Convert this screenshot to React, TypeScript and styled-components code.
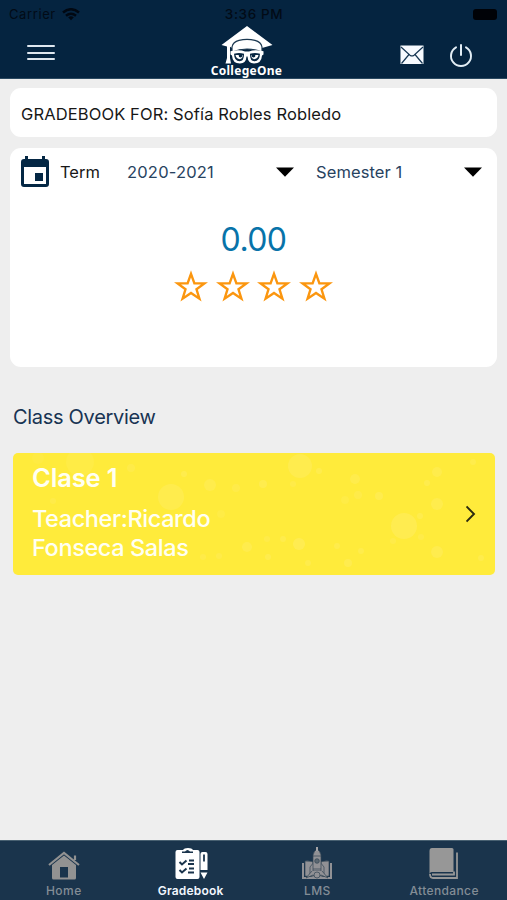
import React from "react";
import styled, { createGlobalStyle } from "styled-components";

const Global = createGlobalStyle`
  * { box-sizing: border-box; }
  body { margin: 0; background: #eeeeee; font-family: Inter, "Liberation Sans", sans-serif; }
`;

const Screen = styled.div`
  width: 507px;
  height: 900px;
  display: flex;
  flex-direction: column;
  background: #eeeeee;
  overflow: hidden;
`;

const Header = styled.header`
  height: 79px;
  flex: none;
  background: #052440;
  border-bottom: 1px solid #2b4961;
`;

const StatusBar = styled.div`
  height: 27px;
  display: grid;
  grid-template-columns: 1fr auto 1fr;
  align-items: center;
  padding: 1px 10px 0 9px;
  color: #020b16;
  font-size: 13px;
  line-height: 16px;
`;

const Carrier = styled.div`
  display: flex;
  align-items: center;
  gap: 6px;
  letter-spacing: 0.6px;
`;

const Clock = styled.div`
  margin-left: 2px;
  font-size: 13.5px;
  font-weight: 500;
  letter-spacing: 0.6px;
`;

const Battery = styled.div`
  justify-self: end;
  width: 24px;
  height: 11px;
  border-radius: 3px;
  background: #000207;
`;

const NavBar = styled.div`
  height: 51px;
  display: grid;
  grid-template-columns: 1fr auto 1fr;
  padding: 0 34px 0 27px;
`;

const MenuLines = styled.div`
  margin-top: 18px;
  width: 28px;
  height: 15px;
  display: flex;
  flex-direction: column;
  justify-content: space-between;
`;

const Line = styled.span`
  height: 2px;
  border-radius: 1px;
  background: #dfe7ef;
`;

const Brand = styled.div`
  display: flex;
  flex-direction: column;
  align-items: center;
  width: 75px;
  margin: -1px 7px 0 0;
`;

const BrandName = styled.div`
  font: 700 12px/14px "Noto Sans", "Open Sans", sans-serif;
  letter-spacing: 0.28px;
  color: #ffffff;
`;

const Actions = styled.div`
  display: flex;
  justify-content: flex-end;
  gap: 25px;
  padding-top: 17px;
`;

const Main = styled.main`
  flex: 1;
  padding: 9px 10px 0;
`;

const Card = styled.section<{ $height: number }>`
  height: ${(p) => p.$height}px;
  background: #ffffff;
  border-radius: 11px;
`;

const StudentCard = styled(Card)`
  display: flex;
  align-items: center;
  padding: 2px 11px 0;
  margin-bottom: 11px;
`;

const Label = styled.span<{ $color?: string; $track?: number }>`
  font-size: 16.5px;
  line-height: 22px;
  white-space: nowrap;
  color: ${(p) => p.$color ?? "#171717"};
  letter-spacing: ${(p) => p.$track ?? 0}px;
`;

const Filters = styled.div`
  display: grid;
  grid-template-columns: 30px 67px 188px 1fr;
  align-items: center;
  height: 46px;
  padding: 2px 15px 0 10px;
  & > :nth-child(2) { padding-left: 10px; }
`;

const Select = styled.div`
  display: flex;
  align-items: center;
  justify-content: space-between;
  padding-left: 10px;
  & > svg { margin-right: 11px; }
  &:last-child { padding-left: 11px; }
  &:last-child > svg { margin-right: 0; }
`;

const Score = styled.div`
  margin-top: 25px;
  text-align: center;
  color: #0873a9;
  font-size: 32px;
  line-height: 42px;
  letter-spacing: -0.6px;
`;

const Stars = styled.div`
  display: flex;
  justify-content: center;
  gap: 7.8px;
  margin-top: 8px;
`;

const Heading = styled.h2`
  margin: 36px 0 0 3px;
  font-size: 20px;
  line-height: 28px;
  font-weight: 400;
  letter-spacing: -0.3px;
  color: #183453;
`;

const ClassCard = styled.section`
  position: relative;
  display: flex;
  align-items: center;
  justify-content: space-between;
  width: 482px;
  height: 122px;
  margin: 22px 0 0 3px;
  padding: 0 19px;
  border-radius: 5px;
  background: #ffeb3b;
  overflow: hidden;
`;

const Bokeh = styled.svg`
  position: absolute;
  inset: 0;
`;

const ClassInfo = styled.div`
  position: relative;
  align-self: flex-start;
  color: #fffff2;
`;

const ClassName = styled.div`
  margin-top: 9px;
  font-size: 25.5px;
  line-height: 32px;
  font-weight: 600;
  letter-spacing: -0.15px;
`;

const Teacher = styled.div`
  width: 205px;
  margin-top: 10px;
  font-size: 23.5px;
  line-height: 29px;
  font-weight: 500;
  letter-spacing: -0.4px;
`;

const Chevron = styled.svg`
  position: relative;
`;

const TabBar = styled.nav`
  flex: none;
  height: 60px;
  display: grid;
  grid-template-columns: repeat(4, 1fr);
  border-top: 1px solid #486071;
  background: #1a344c;
`;

const Tab = styled.div<{ $active?: boolean; $track: number }>`
  display: flex;
  flex-direction: column;
  align-items: center;
  padding: 6px 0 0 1px;
  font-size: 12px;
  line-height: 16px;
  font-weight: ${(p) => (p.$active ? 600 : 500)};
  letter-spacing: ${(p) => p.$track}px;
  color: ${(p) => (p.$active ? "#f2f7ff" : "#838d96")};
  & > svg { margin-bottom: 2px; }
`;

const Arrow = () => (
  <svg width="18" height="10" viewBox="0 0 18 10">
    <path d="M0 .5h18L9 9.7z" fill="#000" />
  </svg>
);

const Star = () => (
  <svg width="34" height="33" viewBox="0 0 34 33">
    <path d="M17 4.8 20.4 14.4h10L22.5 20.3l2.9 9.4-8.4-5.7-8.4 5.7 2.9-9.4L3.6 14.4h10z" fill="none" stroke="#fb960f" strokeWidth="2.4" />
  </svg>
);

const bubbles = [
  [67, 9, 14, 0.08], [158, 44, 13, 0.13], [197, 32, 6, 0.12], [171, 21, 3, 0.13],
  [25, 5, 6, 0.06], [118, 15, 4, 0.1], [223, 35, 4, 0.1], [208, 61, 4, 0.08],
  [234, 94, 5, 0.13], [287, 13, 12, 0.14], [250, 31, 4, 0.14], [280, 31, 3, 0.1],
  [306, 18, 3, 0.13], [342, 26, 5, 0.12], [345, 42, 4, 0.1], [366, 43, 4, 0.14],
  [332, 47, 4, 0.08], [391, 73, 13, 0.15], [424, 51, 6, 0.13], [424, 19, 5, 0.12],
  [414, 30, 3, 0.13], [407, 63, 3, 0.13], [424, 99, 6, 0.14], [286, 91, 6, 0.16],
  [324, 93, 3, 0.12], [348, 98, 3, 0.12], [335, 110, 4, 0.14], [295, 110, 3, 0.12],
  [255, 104, 3, 0.13], [254, 86, 3, 0.1], [270, 86, 3, 0.12], [460, 9, 3, 0.12],
  [468, 105, 3, 0.12], [380, 88, 3, 0.1], [408, 84, 3, 0.1], [40, 48, 3, 0.1],
  [190, 104, 3, 0.1], [206, 103, 3, 0.1],
];

export default function App() {
  return (
    <Screen>
      <Global />
      <Header>
        <StatusBar>
          <Carrier>
            Carrier
            <svg width="18" height="13" viewBox="0 0 18 13" fill="none" stroke="#010812" strokeWidth="2.5">
              <path d="M1 4.5Q9-2 17 4.5M4 7.8q5-4.2 10 0" />
              <path d="M6.2 9.2Q9 7.4 11.8 9.2L9 12.2z" fill="#010812" stroke="none" />
            </svg>
          </Carrier>
          <Clock>3:36 PM</Clock>
          <Battery />
        </StatusBar>
        <NavBar>
          <MenuLines><Line /><Line /><Line /></MenuLines>
          <Brand>
            <svg width="52" height="38" viewBox="0 0 52 38">
              <path d="M26 0 51.5 19 41 22H11l-2-1.300V32l1 5.500H4.500L6 32V20.500L.5 19z" fill="#fff" />
              <path d="M11 26v-5q1-5 7-6.600 8-2.200 16 0 6 1.600 7 6.600v5q-15-6-30 0z" fill="#fff" stroke="#1b3850" strokeWidth="1.200" />
              <path d="M9.500 25.200q9-2.200 14.500.3h4q5.500-2.500 14.500-.3v3.300l-1.500 1q-.5 8-8 8-6 0-6.500-7h-1q-.5 7-6.500 7-7.500 0-8-8l-1.500-1z" fill="#fff" />
              <path d="M13 27.700q5-1.500 10 0 .3 7.600-4.500 7.600-5.200 0-5.500-7.600zm16 0q5-1.500 10 0-.3 7.600-5.500 7.600-4.800 0-4.500-7.600z" fill="#0b2944" />
              <path d="M14.500 29h7q.8 3.800-2.500 4.300-3.800-.5-4.500-4.300zm16 0h7q-.7 3.800-4.500 4.300-3.300-.5-2.500-4.300z" fill="#fff" />
              <circle cx="19.500" cy="29.800" r="1.800" fill="#052440" /><circle cx="32.500" cy="29.800" r="1.800" fill="#052440" />
            </svg>
            <BrandName>CollegeOne</BrandName>
          </Brand>
          <Actions>
            <svg width="24" height="22" viewBox="0 0 24 22">
              <path d="M.5 1.5h23v18.5H.5z" fill="#f7faff" />
              <path d="m1 3 9 8.200q2 1.500 4 0L23 3M1.500 19.500l7.500-9m6 0 7.500 9" fill="none" stroke="#163653" strokeWidth="1.200" />
            </svg>
            <svg width="24" height="24" viewBox="0 0 24 24" fill="none" stroke="#e2edf5" strokeWidth="2">
              <path d="M7 3.300a10 10 0 1 0 10 0M12 1v10" strokeLinecap="round" />
            </svg>
          </Actions>
        </NavBar>
      </Header>
      <Main>
        <StudentCard $height={49}>
          <Label $track={0.12}>GRADEBOOK FOR: Sofía Robles Robledo</Label>
        </StudentCard>
        <Card $height={219}>
          <Filters>
            <svg width="30" height="32" viewBox="0 0 30 32">
              <path fillRule="evenodd" d="M5 0h3v3h14V0h3v3h1q3 0 3 3v22q0 3-3 3H4q-3 0-3-3V6q0-3 3-3h1zM4 11v17h22V11z" fill="#042744" />
              <path d="M15 17h8v8h-8z" fill="#042744" />
            </svg>
            <Label>Term</Label>
            <Select><Label $color="#28435f" $track={0.2}>2020-2021</Label><Arrow /></Select>
            <Select><Label $color="#28435f" $track={0.1}>Semester 1</Label><Arrow /></Select>
          </Filters>
          <Score>0.00</Score>
          <Stars><Star /><Star /><Star /><Star /></Stars>
        </Card>
        <Heading>Class Overview</Heading>
        <ClassCard>
          <Bokeh width="482" height="122" viewBox="0 0 482 122">
            {bubbles.map(([x, y, r, o]) => <circle key={`${x}-${y}`} cx={x} cy={y} r={r} fill="#fff2a0" opacity={o * 1.4} />)}
          </Bokeh>
          <ClassInfo>
            <ClassName>Clase 1</ClassName>
            <Teacher>Teacher:Ricardo Fonseca Salas</Teacher>
          </ClassInfo>
          <Chevron width="10" height="18" viewBox="0 0 10 18">
            <path d="m.5 1.500 7.500 7.500L.5 16.500" fill="none" stroke="#2b2a10" strokeWidth="1.900" />
          </Chevron>
        </ClassCard>
      </Main>
      <TabBar>
        <Tab $track={0.5}>
          <svg width="34" height="34" viewBox="0 0 34 34" fill="#929292">
            <path fillRule="evenodd" d="M5 18 17 8.500 29 18v13q0 1.500-1.500 1.500h-21Q5 32.500 5 31zM13 20v10.500h8V20z" />
            <path d="M2 18 17 6l15 12M28 13V8.500" fill="none" stroke="#929292" strokeWidth="2.200" />
          </svg>
          Home
        </Tab>
        <Tab $active $track={0.2}>
          <svg width="34" height="34" viewBox="0 0 34 34">
            <path d="M3.500 3H9q1-2 5-2t5 2h4.500q2 0 2 2v25q0 2-2 2h-20q-2 0-2-2V5q0-2 2-2z" fill="#fff" />
            <path d="M8 6h11v-1.500h-3q-2.500-3-5 0H8z" fill="#1a344c" />
            <path d="m5.500 15 2.500 2.500 4.500-4M5.500 23l2.500 2.500 4.500-4M15 13.500h5M14 17h6M15 21.500h5M14 25.500h6" fill="none" stroke="#1a344c" strokeWidth="2" />
            <path d="M26.500 7q0-2 2-2h3q2 0 2 2v16h-7zm0 18.500h7L30 32z" fill="#fff" />
            <path d="M30 7.500v7" stroke="#1a344c" strokeWidth="1.800" />
          </svg>
          Gradebook
        </Tab>
        <Tab $track={0.5}>
          <svg width="34" height="34" viewBox="0 0 34 34" fill="#919195" stroke="#334654" strokeWidth=".7">
            <path d="M5 14q7-1 12 4 5-5 12-4v15q-7 0-12 3-5-3-12-3z" />
            <path d="M3 16v15h28V16" fill="none" stroke="#919195" strokeWidth="2" />
            <path d="m14 15-4 5v9q7-1 14 0v-9l-4-5z" />
            <path d="M13 24V8q1-4 4-6 3 2 4 6v16z" />
            <path d="M13 9h8M13 22h8M12 24l-6 7 7-3 4 3 4-3 7 3-6-7" />
            <path d="M17 0v4" stroke="#a4a4a7" strokeWidth="2" />
            <circle cx="17" cy="14" r="2.300" fill="#5c6872" /><circle cx="17" cy="28" r="3" />
          </svg>
          LMS
        </Tab>
        <Tab $track={0.38}>
          <svg width="34" height="34" viewBox="0 0 34 34">
            <path d="M5 1h20q1.500 0 1.500 1.500V25H5q-2.500 0-2.500 3V4q0-3 2.500-3z" fill="#979797" />
            <path d="M3 27q0 4 3 4h24V5.500M5 27.500h22v-3" fill="none" stroke="#979797" strokeWidth="1.800" />
          </svg>
          Attendance
        </Tab>
      </TabBar>
    </Screen>
  );
}
